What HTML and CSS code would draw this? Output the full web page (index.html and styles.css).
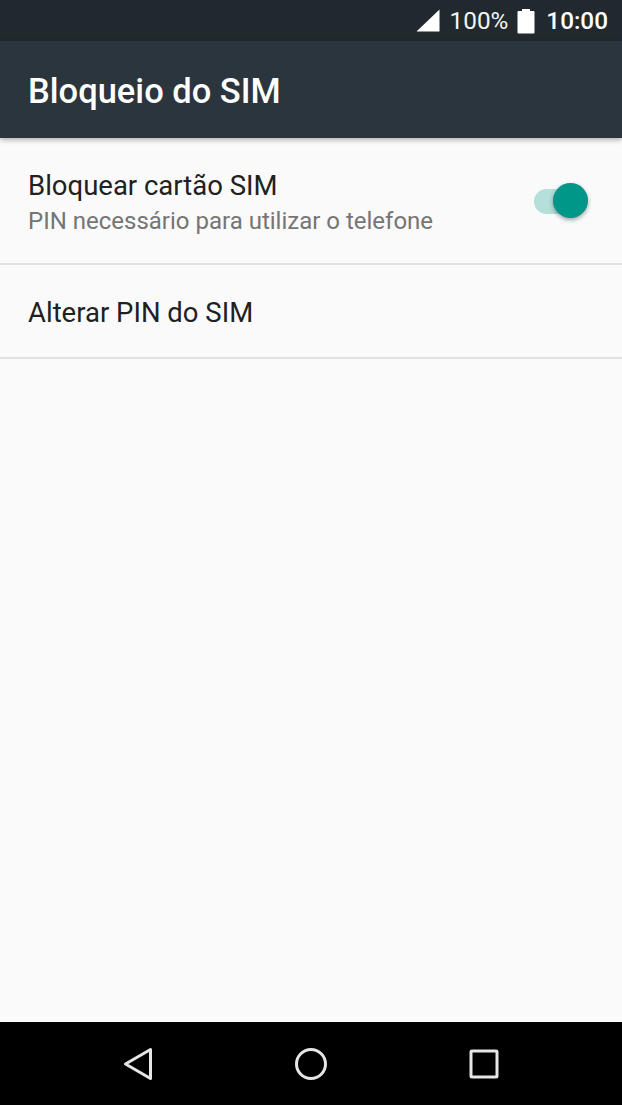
FILE: index.html
```html
<!DOCTYPE html>
<html lang="pt">
<head>
    <meta charset="UTF-8">
    <meta name="viewport" content="width=device-width, initial-scale=1.0">
    <title>Bloqueio do SIM</title>
    <link rel="stylesheet" href="styles.css">
</head>
<body>
    <div class="screen">
        <div class="status-bar">
            <svg class="signal-icon" width="24" height="23" viewBox="0 0 24 23">
                <path d="M23.500 0.500V22.500H0.500Z" fill="#fff"/>
            </svg>
            <span class="battery-text">100%</span>
            <svg class="battery-icon" width="18" height="26" viewBox="0 0 18 26">
                <path d="M5 1h8v2h3.500a1 1 0 0 1 1 1v20.500a1 1 0 0 1-1 1h-15a1 1 0 0 1-1-1V4a1 1 0 0 1 1-1H5Z" fill="#fff"/>
            </svg>
            <span class="clock">10:00</span>
        </div>

        <header class="toolbar">
            <h1>Bloqueio do SIM</h1>
        </header>

        <main class="settings-list">
            <div class="settings-row row-tall">
                <div class="row-text">
                    <div class="row-title">Bloquear cartão SIM</div>
                    <div class="row-summary">PIN necessário para utilizar o telefone</div>
                </div>
                <div class="switch">
                    <div class="switch-track"></div>
                    <div class="switch-thumb"></div>
                </div>
            </div>
            <div class="settings-row row-short">
                <div class="row-title">Alterar PIN do SIM</div>
            </div>
        </main>

        <nav class="nav-bar">
            <svg width="32" height="34" viewBox="0 0 32 34">
                <path d="M27.500 2.500V31.500L2.500 17Z" fill="none" stroke="#e6e6e6" stroke-width="3" stroke-linejoin="round"/>
            </svg>
            <svg class="home-icon" width="34" height="34" viewBox="0 0 34 34">
                <circle cx="17" cy="17" r="14.500" fill="none" stroke="#e6e6e6" stroke-width="3"/>
            </svg>
            <svg width="30" height="30" viewBox="0 0 30 30">
                <rect x="2" y="2" width="26" height="26" rx="1" fill="none" stroke="#e6e6e6" stroke-width="3"/>
            </svg>
        </nav>
    </div>
</body>
</html>
```
FILE: styles.css
```css
* {
    box-sizing: border-box;
}
body {
    margin: 0;
    padding: 0;
    font-family: Roboto, sans-serif;
    background-color: #fafafa;
}
.screen {
    width: 622px;
    height: 1105px;
    display: flex;
    flex-direction: column;
    overflow: hidden;
}
.status-bar {
    height: 41px;
    flex-shrink: 0;
    display: flex;
    align-items: center;
    padding-right: 14px;
    justify-content: flex-end;
    background-color: #22292e;
    color: #fff;
    font-size: 24.300px;
}
.signal-icon {
    margin-right: 10px;
}
.battery-text {
    font-weight: 400;
    color: #f2f4f4;
}
.battery-icon {
    margin-left: 9px;
    margin-right: 11px;
}
.clock {
    font-weight: 500;
}
.toolbar {
    height: 97px;
    flex-shrink: 0;
    display: flex;
    align-items: center;
    padding: 2px 0 0 28px;
    background-color: #2b353d;
    box-shadow: 0 2px 5px rgba(0, 0, 0, 0.3);
    position: relative;
}
.toolbar h1 {
    margin: 0;
    font-size: 34.500px;
    font-weight: 500;
    color: #fff;
}
.settings-list {
    flex: 1;
}
.settings-row {
    display: flex;
    align-items: center;
    justify-content: space-between;
    padding: 0 34px 0 28px;
    border-bottom: 2px solid #e2e2e2;
}
.row-tall {
    height: 127px;
}
.row-short {
    height: 94px;
    padding-top: 3px;
}
.row-text {
    display: flex;
    flex-direction: column;
    gap: 5px;
    padding-top: 3px;
}
.row-title {
    font-size: 27.500px;
    color: #212121;
}
.row-summary {
    font-size: 24px;
    color: #757575;
}
.switch {
    width: 54px;
    height: 36px;
    position: relative;
}
.switch-track {
    position: absolute;
    left: 0;
    right: 4px;
    top: 6px;
    height: 25px;
    border-radius: 13px;
    background-color: #b4dfdb;
}
.switch-thumb {
    position: absolute;
    right: 0;
    top: 0;
    width: 35px;
    height: 35px;
    border-radius: 50%;
    background-color: #009688;
    box-shadow: 0 2px 4px rgba(0, 0, 0, 0.35);
}
.nav-bar {
    height: 83px;
    flex-shrink: 0;
    display: flex;
    align-items: center;
    justify-content: space-between;
    padding: 0 123px;
    background-color: #000;
}
.home-icon {
    margin-left: -2px;
}
```
